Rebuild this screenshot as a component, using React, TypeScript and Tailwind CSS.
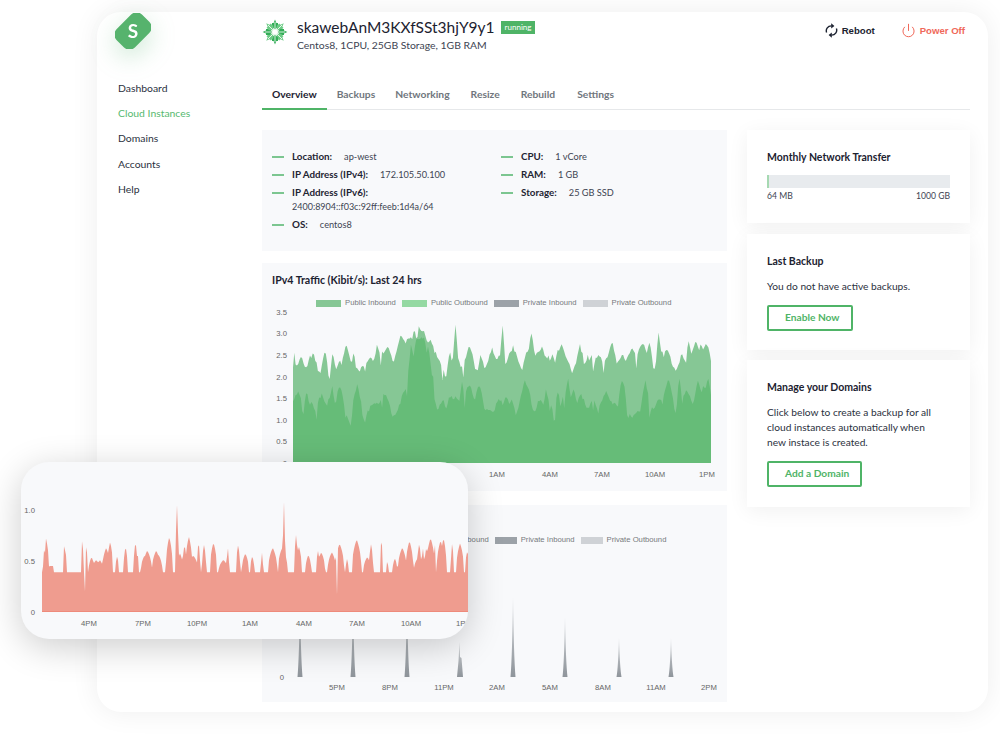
import type { ReactNode } from "react";
import { Power } from "lucide-react";

const BODY_FONT = "font-['Lato',sans-serif]";

// small seeded random so the charts stay the same on every load
const makeRandom = (seed: number) => () => {
  seed = (seed + 0x6d2b79f5) | 0;
  let t = Math.imul(seed ^ (seed >>> 15), 1 | seed);
  t = (t + Math.imul(t ^ (t >>> 7), 61 | t)) ^ t;
  return ((t ^ (t >>> 14)) >>> 0) / 4294967296;
};

const areaPath = (values: number[], x0: number, step: number, y0: number, scale: number) => {
  const pts = values.map((v, i) => `${(x0 + i * step).toFixed(1)} ${(y0 - v * scale).toFixed(1)}`);
  return `M${x0} ${y0}L${pts.join("L")}L${(x0 + (values.length - 1) * step).toFixed(1)} ${y0}Z`;
};

const greenSeries = (seed: number, base: number, floor: number, top: number, lift: number, needles: [number, number][]) => {
  const rand = makeRandom(seed);
  const n = 320;
  const out = new Array(n).fill(0).map(() => floor);
  let x = 0;
  while (x < n) {
    const h = base + (rand() - 0.4) * top;
    const w = 2 + rand() * 4.5;
    for (let i = Math.max(0, Math.ceil(x - w)); i < Math.min(n, x + w); i++) {
      const t = Math.max(0, 1 - Math.abs(i - x) / w);
      out[i] = Math.max(out[i], floor + (h - floor) * Math.pow(t, 0.45));
    }
    x += 1.5 + rand() * 4.5;
  }
  for (let i = 0; i < n; i++) {
    const f = i / n;
    if (f < 0.2) out[i] -= 0.12;
    if (f > 0.24 && f < 0.335) out[i] += lift * Math.max(0, 1 - Math.abs(f - 0.3) / 0.055);
    out[i] += (rand() - 0.5) * 0.1;
    if (rand() < 0.02) out[i] -= 0.25;
  }
  needles.forEach(([f, v]) => {
    const i = Math.round(f * n);
    out[i] = v;
    out[i - 1] = (v + (out[i - 1] ?? v)) / 2;
    out[i + 1] = (v + out[i + 1]) / 2;
  });
  return out;
};

const redSeries = () => {
  const rand = makeRandom(41);
  const n = 430;
  const out = new Array(n).fill(0.39);
  let x = 4;
  while (x < n) {
    const h = 0.5 + rand() * 0.26;
    const w = 1 + rand() * 4;
    for (let i = Math.max(0, Math.ceil(x - w)); i < Math.min(n, x + w); i++) {
      const t = Math.max(0, 1 - Math.abs(i - x) / w);
      out[i] = Math.max(out[i], 0.39 + (h - 0.39) * Math.pow(t, 0.4));
    }
    x += 2 + rand() * 9;
  }
  for (let i = 8; i < 22; i++) out[i] = 0.39 + (i < 12 ? 0.06 : 0);
  for (let i = 25; i < 40; i++) out[i] = 0.39;
  out[3] = 0.58;
  out[0] = 0.39;
  out[135] = 1.05;
  out[134] = 0.8;
  out[136] = 0.78;
  out[242] = 1.08;
  out[241] = 0.75;
  out[243] = 0.7;
  out[43] = 0.2;
  out[295] = 0.17;
  return out;
};

const outerGreen = greenSeries(7, 2.35, 1.95, 0.85, 0.75, [[0.003, 2.55], [0.388, 3.2], [0.5, 3.18], [0.57, 3.0], [0.873, 3.02]]);
const innerGreen = greenSeries(19, 1.4, 0.98, 1.0, 1.35, []);
const redValues = redSeries();

const axisText = "fill-[#666666] text-[7.7px] font-['Liberation_Sans',sans-serif]";

function Legend({ items, className }: { items: { label: string; color: string }[]; className: string }) {
  return (
    <div className={`flex h-[8px] items-center font-['Liberation_Sans',sans-serif] text-[7.7px] text-[#77797d] ${className}`}>
      {items.map((item) => (
        <div key={item.label} className="flex items-center gap-[4px]">
          <span className="h-[7px] w-full min-w-[22px] block" style={{ background: item.color }} />
          <span className="whitespace-nowrap">{item.label}</span>
        </div>
      ))}
    </div>
  );
}

const legendItems = [
  { label: "Public Inbound", color: "#86c795" },
  { label: "Public Outbound", color: "#94d9a2" },
  { label: "Private Inbound", color: "#9ca2a8" },
  { label: "Private Outbound", color: "#cfd2d6" },
];

function Ipv4Chart() {
  const ticks = ["3.5", "3.0", "2.5", "2.0", "1.5", "1.0", "0.5", "0"];
  const labels: [string, number][] = [["4PM", 75], ["7PM", 128], ["10PM", 181], ["1AM", 235], ["4AM", 288], ["7AM", 340], ["10AM", 393], ["1PM", 445]];
  return (
    <svg width="465" height="183" className="block">
      {ticks.map((t, i) => (
        <text key={t} x="25" y={6.7 + i * 21.6} textAnchor="end" className={axisText}>{t}</text>
      ))}
      <path d={areaPath(outerGreen, 31, 418 / 319, 155, 43.2)} fill="#86c795" />
      <path d={areaPath(innerGreen, 31, 418 / 319, 155, 43.2)} fill="#66bc78" />
      {labels.map(([t, x]) => (
        <text key={t} x={x} y="169" textAnchor="middle" className={axisText}>{t}</text>
      ))}
    </svg>
  );
}

function Ipv6Chart() {
  const spikes: [number, number][] = [[38, 80], [91, 80], [145, 80], [198, 35], [251, 80], [303, 60], [357, 39], [409, 39]];
  const labels: [string, number][] = [["5PM", 75], ["8PM", 128], ["11PM", 182], ["2AM", 235], ["5AM", 288], ["8AM", 341], ["11AM", 394], ["2PM", 447]];
  return (
    <svg width="464" height="157" className="block">
      <defs>
        <linearGradient id="spike" x1="0" y1="0" x2="0" y2="1">
          <stop offset="0" stopColor="#d3d6d9" />
          <stop offset="1" stopColor="#8f959b" />
        </linearGradient>
      </defs>
      <text x="22" y="135" textAnchor="end" className={axisText}>0</text>
      {spikes.map(([x, h]) => (
        <path
          key={x}
          d={
            x === 198
              ? `M${x - 3} 132 L${x - 1.5} 116 L${x - 0.5} ${132 - h} L${x} 112 L${x + 1.5} 113 L${x + 3} 132Z`
              : `M${x - 2.5} 132 Q${x - 0.8} ${132 - h * 0.25} ${x} ${132 - h} Q${x + 0.8} ${132 - h * 0.25} ${x + 2.5} 132Z`
          }
          fill="url(#spike)"
        />
      ))}
      {labels.map(([t, x]) => (
        <text key={t} x={x} y="145" textAnchor="middle" className={axisText}>{t}</text>
      ))}
    </svg>
  );
}

function FloatingChart() {
  const labels: [string, number][] = [["4PM", 68], ["7PM", 122], ["10PM", 176], ["1AM", 229], ["4AM", 283], ["7AM", 336], ["10AM", 390], ["1PM", 443]];
  return (
    <div className="absolute left-[21px] top-[462px] w-[447px] h-[177px] rounded-[28px] bg-[#f8f9fb] shadow-[0_8px_36px_rgba(0,0,0,0.2)] overflow-hidden">
      <svg width="447" height="177" className="block">
        <text x="14" y="51" textAnchor="end" className={axisText}>1.0</text>
        <text x="14" y="102" textAnchor="end" className={axisText}>0.5</text>
        <text x="14" y="153" textAnchor="end" className={axisText}>0</text>
        <path d={areaPath(redValues, 21, 1, 150, 102)} fill="#ef9c8f" />
        <rect x="21" y="149" width="426" height="1" fill="#ee8a7b" />
        {labels.map(([t, x]) => (
          <text key={t} x={x} y="164" textAnchor="middle" className={axisText}>{t}</text>
        ))}
      </svg>
    </div>
  );
}

function CentosLogo() {
  return (
    <svg width="26" height="26" viewBox="-13 -13 26 26" className="shrink-0">
      {[0, 45, 90, 135, 180, 225, 270, 315].map((a, i) => (
        <g key={a} transform={`rotate(${a})`}>
          <path d="M0 -2.6 L3 -5.4 L3 -9 L1.4 -9 L0 -12.4 L-1.4 -9 L-3 -9 L-3 -5.4Z" fill={i % 2 ? "#6ccb85" : "#33ad57"} />
          <path d="M0 -3 L0 -10" stroke="#ffffff" strokeWidth="0.8" />
        </g>
      ))}
    </svg>
  );
}

function Logo() {
  return (
    <svg width="36" height="36" viewBox="0 0 36 36" className="drop-shadow-[0_8px_12px_rgba(90,180,115,0.3)]">
      <rect x="0" y="5" width="36" height="26" rx="8" fill="#56b36d" transform="rotate(-45 18 18)" />
      <text x="18" y="24.5" textAnchor="middle" fill="#ffffff" fontSize="19" fontWeight="700" fontFamily="Lato, sans-serif">S</text>
    </svg>
  );
}

function RebootIcon() {
  return (
    <svg width="13" height="15" viewBox="0 0 13 15" fill="none" className="text-[#1c2230]">
      <path d="M1.6 9.6A5 5 0 0 1 6.5 2.9" stroke="currentColor" strokeWidth="1.4" />
      <path d="M11.4 5.4A5 5 0 0 1 6.5 12.1" stroke="currentColor" strokeWidth="1.4" />
      <path d="M6.2 0.2L9.4 2.9L6.2 5.4Z" fill="currentColor" />
      <path d="M6.8 9.6L3.6 12.1L6.8 14.8Z" fill="currentColor" />
    </svg>
  );
}

function InfoRow({ label, value, wrap }: { label: string; value: string; wrap?: boolean }) {
  return (
    <div className="flex items-start">
      <span className="w-[12px] h-[2px] bg-[#7cc690] mt-[8px] mr-[8px] shrink-0" />
      <div className="text-[#3d4452] whitespace-nowrap">
        <div className="flex items-center h-[18px] leading-none">
          <span className="text-[9.8px] font-bold text-[#1f2533]">{label}</span>
          {!wrap && <span className="ml-[12px] text-[9.2px]">{value}</span>}
        </div>
        {wrap && <div className="text-[9px] leading-[13px] -mt-[2px]">{value}</div>}
      </div>
    </div>
  );
}

function Card({ title, className, children }: { title: string; className: string; children: ReactNode }) {
  return (
    <div className={`bg-white px-[20px] shadow-[0_4px_20px_rgba(0,0,0,0.06)] ${className}`}>
      <h3 className="text-[10.5px] leading-[14px] font-bold text-[#1c2230]">{title}</h3>
      {children}
    </div>
  );
}

export default function App() {
  return (
    <div className={`relative w-[1000px] h-[743px] overflow-hidden bg-white pt-[12px] pl-[97px] ${BODY_FONT}`}>
      <div className="flex w-[891px] h-[700px] rounded-[24px] bg-white shadow-[0_0_28px_rgba(0,0,0,0.07)]">
        {/* sidebar */}
        <aside className="w-[165px] shrink-0 pl-[21px]">
          <div className="-ml-[3px] mt-[1px] h-[36px]">
            <Logo />
          </div>
          <nav className="mt-[31px] flex flex-col gap-[9.2px] text-[10.4px] leading-[16px] text-[#2b3140]">
            <a>Dashboard</a>
            <a className="text-[#56b96f]">Cloud Instances</a>
            <a>Domains</a>
            <a>Accounts</a>
            <a>Help</a>
          </nav>
        </aside>

        {/* main column */}
        <main className="w-[708px] shrink-0">
          <header className="flex justify-between h-[68px]">
            <div className="flex gap-[9px] pt-[7px]">
              <CentosLogo />
              <div className="-mt-[3px]">
                <div className="flex items-center gap-[6px]">
                  <span className="text-[15.5px] leading-[22px] text-[#1c2230]">skawebAnM3KXfSSt3hjY9y1</span>
                  <span className="bg-[#4fb467] text-white text-[8px] leading-[13px] px-[4px]">running</span>
                </div>
                <p className="text-[10.4px] leading-[14px] text-[#3d4452]">Centos8, 1CPU, 25GB Storage, 1GB RAM</p>
              </div>
            </div>
            <div className="flex items-start pt-[11px] pr-[5px] font-['Liberation_Sans',sans-serif] text-[9.6px] font-bold leading-[15px]">
              <div className="flex items-center gap-[4px] text-[#1c2230]">
                <RebootIcon />
                <span>Reboot</span>
              </div>
              <div className="flex items-center gap-[4px] ml-[26px] text-[#f0695a]">
                <Power size={15} strokeWidth={1.6} />
                <span>Power Off</span>
              </div>
            </div>
          </header>

          <div className="flex border-b border-[#e6e8ea] h-[30px] text-[10.3px] font-bold leading-[28px] text-[#70767d]">
            <span className="px-[10px] text-[#1c2230] border-b-2 border-[#4fb467] h-[30px]">Overview</span>
            <span className="pl-[10px] pr-[10px]">Backups</span>
            <span className="px-[10px]">Networking</span>
            <span className="pl-[11px] pr-[10px]">Resize</span>
            <span className="pl-[11px] pr-[10px]">Rebuild</span>
            <span className="pl-[12px] pr-[10px]">Settings</span>
          </div>

          <div className="flex justify-between mt-[20px]">
            <div className="w-[465px] flex flex-col">
              {/* instance details */}
              <section className="h-[121px] bg-[#f8f9fb] pt-[18px] pl-[10px] flex">
                <div className="w-[229px] flex flex-col">
                  <InfoRow label="Location:" value="ap-west" />
                  <InfoRow label="IP Address (IPv4):" value="172.105.50.100" />
                  <InfoRow label="IP Address (IPv6):" value="2400:8904::f03c:92ff:feeb:1d4a/64" wrap />
                  <div className="h-[3px]" />
                  <InfoRow label="OS:" value="centos8" />
                </div>
                <div className="flex flex-col">
                  <InfoRow label="CPU:" value="1 vCore" />
                  <InfoRow label="RAM:" value="1 GB" />
                  <InfoRow label="Storage:" value="25 GB SSD" />
                </div>
              </section>

              <section className="mt-[12px] h-[228px] bg-[#f8f9fb]">
                <h3 className="pl-[10px] pt-[10px] text-[10.6px] leading-[14px] font-bold text-[#1c2230]">IPv4 Traffic (Kibit/s): Last 24 hrs</h3>
                <div className="mt-[12px] mb-[1px]">
                  <Legend items={legendItems} className="pl-[54px] gap-[6px] [&_span:first-child]:min-w-[25px]" />
                </div>
                <Ipv4Chart />
              </section>

              <section className="mt-[14px] h-[197px] bg-[#f8f9fb]">
                <h3 className="pl-[10px] pt-[10px] text-[10.6px] leading-[14px] font-bold text-[#1c2230]">IPv6 Traffic (Kibit/s): Last 24 hrs</h3>
                <div className="mt-[7px]">
                  <Legend items={legendItems} className="pl-[61px] gap-[6px]" />
                </div>
                <div className="mt-[1px]">
                  <Ipv6Chart />
                </div>
              </section>
            </div>

            {/* side cards */}
            <div className="w-[223px] flex flex-col">
              <Card title="Monthly Network Transfer" className="h-[93px] pt-[20px]">
                <div className="mt-[11px] h-[13px] bg-[#e8ebee]">
                  <div className="h-full w-[2px] bg-[#a6d9b2]" />
                </div>
                <div className="flex justify-between mt-[2px] text-[8.6px] leading-[12px] text-[#3d4452]">
                  <span>64 MB</span>
                  <span>1000 GB</span>
                </div>
              </Card>
              <Card title="Last Backup" className="h-[116px] pt-[20px] mt-[11px]">
                <p className="mt-[11px] text-[10.2px] leading-[15px] text-[#2b3140]">You do not have active backups.</p>
                <button className="block mt-[11px] w-[86px] h-[26px] pl-[16px] text-left rounded-[2px] border-2 border-[#4fb467] text-[10.2px] font-bold text-[#4fb467]">Enable Now</button>
              </Card>
              <Card title="Manage your Domains" className="h-[147px] pt-[20px] mt-[10px]">
                <p className="mt-[11px] text-[10.2px] leading-[15px] text-[#2b3140]">
                  Click below to create a backup for all
                  <br />
                  cloud instances automatically when
                  <br />
                  new instace is created.
                </p>
                <button className="block mt-[11px] w-[95px] h-[26px] pl-[16px] text-left rounded-[2px] border-2 border-[#4fb467] text-[10.2px] font-bold text-[#4fb467]">Add a Domain</button>
              </Card>
            </div>
          </div>
        </main>
      </div>

      <FloatingChart />
    </div>
  );
}
